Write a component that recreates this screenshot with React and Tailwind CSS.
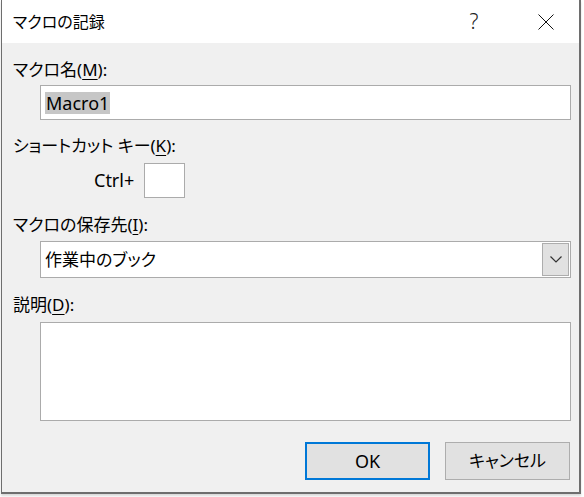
import React from "react";

const font = "font-['Segoe_UI','Noto_Sans','Noto_Sans_CJK_JP',sans-serif] [font-feature-settings:'palt']";

function Label({ text, hotkey, tail = "" }) {
    // label with underlined access key, e.g. マクロ名(M):
    return (
        <div className="h-[24px] leading-[24px] text-[17px] text-[#000] pl-[11px] whitespace-nowrap">
            {text}(<span className="underline underline-offset-[3px]">{hotkey}</span>){tail}:
        </div>
    );
}

function Chevron() {
    return (
        <svg width="12" height="7" viewBox="0 0 12 7" fill="none">
            <path d="M0.5 0.5 L6 6 L11.5 0.5" stroke="#333" strokeWidth="1.2" />
        </svg>
    );
}

export default function App() {
    return (
        <div className={"w-[584px] h-[497px] bg-white overflow-hidden " + font}>
            <div className="ml-[1px] w-[580px] h-[494px] border-l border-r-2 border-b-2 border-[#6e6e6e] bg-[#f0f0f0] flex flex-col shadow-[0_2px_2px_rgba(0,0,0,0.15)]">
                {/* title bar */}
                <div className="h-[43px] bg-white flex items-center shrink-0">
                    <div className="pl-[11px] text-[16px] text-[#000] flex-1">マクロの記録</div>
                    <div className="w-[20px] text-center text-[21px] leading-[21px] font-light text-[#222] mr-[54px] font-['Noto_Sans',sans-serif]">?</div>
                    <svg width="16" height="16" viewBox="0 0 16 16" className="mr-[25px]">
                        <path d="M0.5 0.5 L15.5 15.5 M15.5 0.5 L0.5 15.5" stroke="#111" strokeWidth="1" />
                    </svg>
                </div>

                <div className="mt-[15px]">
                    <Label text="マクロ名" hotkey="M" />
                </div>
                <div className="mt-[3px] ml-[38px] w-[531px] h-[35px] bg-white border border-[#ababab] flex items-center pl-[4px]">
                    <span className="bg-[#c6c6c6] text-[18px] leading-[22px] px-[1px] font-['Noto_Sans',sans-serif]">Macro1</span>
                </div>

                <div className="mt-[14px]">
                    <Label text="ショートカット キー" hotkey="K" />
                </div>
                <div className="mt-[5px] flex items-center">
                    <span className="ml-[92px] w-[50px] text-[18px] font-['Noto_Sans',sans-serif]">Ctrl+</span>
                    <div className="w-[41px] h-[35px] bg-white border border-[#ababab]"></div>
                </div>

                <div className="mt-[15px]">
                    <Label text="マクロの保存先" hotkey="I" />
                </div>
                <div className="mt-[4px] ml-[38px] w-[531px] h-[37px] bg-white border border-[#ababab] flex items-center">
                    <span className="flex-1 pl-[4px] text-[17px]">作業中のブック</span>
                    <div className="w-[27px] h-[33px] mr-[1px] bg-[#e1e1e1] border border-[#adadad] flex items-center justify-center">
                        <Chevron />
                    </div>
                </div>

                <div className="mt-[15px]">
                    <Label text="説明" hotkey="D" />
                </div>
                <div className="mt-[5px] ml-[38px] w-[531px] h-[99px] bg-white border border-[#ababab]"></div>

                <div className="mt-[21px] flex justify-end pr-[9px] gap-[15px]">
                    <button className="w-[125px] h-[38px] bg-[#e1e1e1] border-2 border-[#0078d7] text-[18px] text-black font-['Noto_Sans',sans-serif]">
                        OK
                    </button>
                    <button className="w-[125px] h-[38px] bg-[#e1e1e1] border border-[#adadad] text-[17px] text-black">
                        キャンセル
                    </button>
                </div>
            </div>
        </div>
    );
}
